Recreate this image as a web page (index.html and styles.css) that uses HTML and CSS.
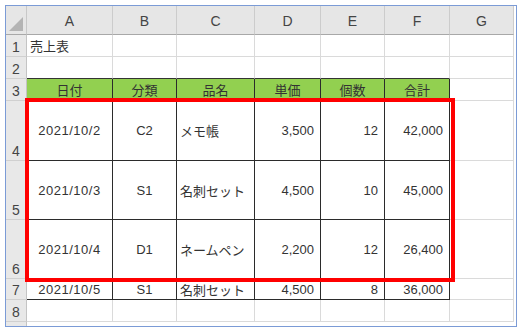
FILE: index.html
```html
<!DOCTYPE html>
<html lang="ja">
<head>
<meta charset="utf-8">
<link rel="stylesheet" href="styles.css">
</head>
<body>
<div class="frame">
  <div class="sheet">
    <div class="cell corner"><svg width="20" height="28" viewBox="0 0 20 28"><polygon points="17,11 17,25 3,25" fill="#b4b4b4"/></svg></div>
    <div class="cell ch">A</div><div class="cell ch">B</div><div class="cell ch">C</div><div class="cell ch">D</div><div class="cell ch">E</div><div class="cell ch">F</div><div class="cell ch">G</div>

    <div class="cell rh">1</div>
    <div class="cell l over">売上表</div><div class="cell"></div><div class="cell"></div><div class="cell"></div><div class="cell"></div><div class="cell"></div><div class="cell"></div>

    <div class="cell rh">2</div>
    <div class="cell bb"></div><div class="cell bb"></div><div class="cell bb"></div><div class="cell bb"></div><div class="cell bb"></div><div class="cell bb"></div><div class="cell"></div>

    <div class="cell rh">3</div>
    <div class="cell tb hd c">日付</div><div class="cell tb hd c">分類</div><div class="cell tb hd c">品名</div><div class="cell tb hd c">単価</div><div class="cell tb hd c">個数</div><div class="cell tb hd c">合計</div><div class="cell"></div>

    <div class="cell rh">4</div>
    <div class="cell tb c date">2021/10/2</div><div class="cell tb c">C2</div><div class="cell tb l">メモ帳</div><div class="cell tb r">3,500</div><div class="cell tb r">12</div><div class="cell tb r">42,000</div><div class="cell"></div>

    <div class="cell rh">5</div>
    <div class="cell tb c date">2021/10/3</div><div class="cell tb c">S1</div><div class="cell tb l">名刺セット</div><div class="cell tb r">4,500</div><div class="cell tb r">10</div><div class="cell tb r">45,000</div><div class="cell"></div>

    <div class="cell rh">6</div>
    <div class="cell tb c date">2021/10/4</div><div class="cell tb c">D1</div><div class="cell tb l">ネームペン</div><div class="cell tb r">2,200</div><div class="cell tb r">12</div><div class="cell tb r">26,400</div><div class="cell"></div>

    <div class="cell rh">7</div>
    <div class="cell tb c date">2021/10/5</div><div class="cell tb c">S1</div><div class="cell tb l">名刺セット</div><div class="cell tb r">4,500</div><div class="cell tb r">8</div><div class="cell tb r">36,000</div><div class="cell"></div>

    <div class="cell rh">8</div>
    <div class="cell"></div><div class="cell"></div><div class="cell"></div><div class="cell"></div><div class="cell"></div><div class="cell"></div><div class="cell"></div>

    <div class="cell rh tail"></div>
  </div>
  <div class="highlight"></div>
</div>
</body>
</html>
```
FILE: styles.css
```css
html, body {
  margin: 0;
  padding: 0;
  background: #ffffff;
}
body {
  font-family: "Liberation Sans", "Noto Sans CJK JP", sans-serif;
  font-size: 13px;
  color: #333333;
}
.frame {
  position: relative;
  margin: 5px 0 0 5px;
  width: 510px;
  height: 320px;
  border: 1px solid #7b9bd6;
  overflow: hidden;
  background: #ffffff;
}
.sheet {
  display: grid;
  grid-template-columns: 21px 86px 64px 78px 66px 64px 65px 64px;
  grid-template-rows: 29px 22px 22px 22px 60px 59px 59px 21px 22px 4px;
}
.cell {
  box-sizing: border-box;
  border-right: 1px solid #dadada;
  border-bottom: 1px solid #dadada;
  display: flex;
  align-items: center;
  white-space: nowrap;
  min-width: 0;
}
.corner {
  background: #e6e6e6;
  border-right-color: #c8c8c8;
  border-bottom-color: #a8a8a8;
  align-items: flex-start;
}
.ch {
  background: #e6e6e6;
  border-right-color: #cccccc;
  border-bottom-color: #a8a8a8;
  justify-content: center;
  padding-top: 2px;
  color: #444444;
  font-size: 14px;
}
.rh {
  background: #e8e8e8;
  border-right-color: #c4c4c4;
  border-bottom-color: #d0d0d0;
  align-items: flex-end;
  justify-content: center;
  padding-bottom: 1px;
  color: #444444;
  font-size: 14px;
}
.tail {
  grid-column: 1;
  border-bottom: none;
}
.over {
  overflow: visible;
  position: relative;
  z-index: 1;
}
.l {
  justify-content: flex-start;
  padding-left: 3px;
}
.c {
  justify-content: center;
}
.r {
  justify-content: flex-end;
  padding-right: 6px;
}
.date {
  letter-spacing: 0.5px;
}
.bb {
  border-bottom-color: #333333;
}
.tb {
  border-right-color: #2b2b2b;
  border-bottom-color: #2b2b2b;
}
.hd {
  background: #92d050;
}
.highlight {
  position: absolute;
  left: 19px;
  top: 92px;
  width: 430px;
  height: 184px;
  box-sizing: border-box;
  border: 4px solid #ff0000;
  pointer-events: none;
}
```
